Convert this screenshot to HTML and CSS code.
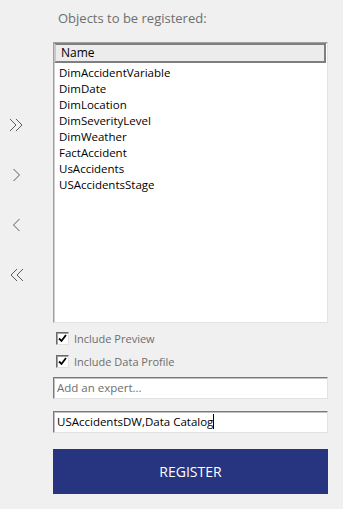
FILE: index.html
```html
<!DOCTYPE html>
<html lang="en">
<head>
    <meta charset="UTF-8">
    <meta name="viewport" content="width=device-width, initial-scale=1.0">
    <title>Register Objects</title>
    <link rel="stylesheet" href="styles.css">
</head>
<body>
    <div class="register-panel">
        <div class="move-buttons">
            <button class="move-btn" title="Add all">
                <svg width="15" height="14" viewBox="0 0 15 14"><path d="M1 1l6 6-6 6M7 1l6 6-6 6" fill="none" stroke="#5a5a5a" stroke-width="1"/></svg>
            </button>
            <button class="move-btn" title="Add">
                <svg width="15" height="14" viewBox="0 0 15 14"><path d="M4.5 1l6 6-6 6" fill="none" stroke="#5a5a5a" stroke-width="1"/></svg>
            </button>
            <button class="move-btn" title="Remove">
                <svg width="15" height="14" viewBox="0 0 15 14"><path d="M10.5 1l-6 6 6 6" fill="none" stroke="#5a5a5a" stroke-width="1"/></svg>
            </button>
            <button class="move-btn" title="Remove all">
                <svg width="15" height="14" viewBox="0 0 15 14"><path d="M14 1l-6 6 6 6M8 1l-6 6 6 6" fill="none" stroke="#5a5a5a" stroke-width="1"/></svg>
            </button>
        </div>

        <div class="register-form">
            <p class="form-title">Objects to be registered:</p>

            <div class="object-list">
                <div class="list-header">Name</div>
                <ul class="list-items">
                    <li>DimAccidentVariable</li>
                    <li>DimDate</li>
                    <li>DimLocation</li>
                    <li>DimSeverityLevel</li>
                    <li>DimWeather</li>
                    <li>FactAccident</li>
                    <li>UsAccidents</li>
                    <li>USAccidentsStage</li>
                </ul>
            </div>

            <label class="check-row">
                <span class="check-box"><svg width="9" height="9" viewBox="0 0 9 9"><path d="M1 4.5l2.5 2.5 4.5-6" fill="none" stroke="#000" stroke-width="1.8"/></svg></span>
                Include Preview
            </label>
            <label class="check-row">
                <span class="check-box"><svg width="9" height="9" viewBox="0 0 9 9"><path d="M1 4.5l2.5 2.5 4.5-6" fill="none" stroke="#000" stroke-width="1.8"/></svg></span>
                Include Data Profile
            </label>

            <div class="text-field placeholder">Add an expert...</div>
            <div class="text-field">USAccidentsDW,Data Catalog<span class="caret"></span></div>

            <button class="register-btn">REGISTER</button>
        </div>
    </div>
</body>
</html>
```

FILE: styles.css
```css
body {
    margin: 0;
    background: #eff0ef;
    font-family: 'Open Sans', 'Noto Sans', sans-serif;
    color: #000;
}
.register-panel {
    display: flex;
    width: 343px;
    height: 509px;
}
.move-buttons {
    width: 53px;
    display: flex;
    flex-direction: column;
    align-items: flex-start;
    padding-top: 117px;
    padding-left: 8px;
    box-sizing: border-box;
    gap: 35px;
}
.move-btn {
    width: 16px;
    height: 15px;
    padding: 0;
    border: none;
    background: none;
    display: flex;
    align-items: center;
    justify-content: center;
    cursor: pointer;
}
.register-form {
    width: 275px;
    display: flex;
    flex-direction: column;
}
.form-title {
    margin: 9px 0 15px 5px;
    font-size: 13px;
    line-height: 18px;
    color: #6e6e6e;
}
.object-list {
    height: 281px;
    box-sizing: border-box;
    background: #fff;
    border: 1px solid;
    border-color: #a0a0a0 #e3e3e3 #e3e3e3 #a0a0a0;
    box-shadow: inset 1px 1px 0 #d0d0d0;
}
.list-header {
    height: 20px;
    box-sizing: border-box;
    margin-right: 1px;
    background: #ececec;
    border: 2px solid #7f7f7f;
    border-left-color: #c8c8c8;
    padding-left: 5px;
    font-size: 12px;
    line-height: 16px;
}
.list-items {
    list-style: none;
    margin: 0;
    padding: 2px 0 0 5px;
    font-size: 11.5px;
    line-height: 16px;
}
.check-row {
    display: flex;
    align-items: center;
    height: 23px;
    padding-left: 3px;
    font-size: 11px;
    color: #6e6e6e;
}
.check-row:first-of-type {
    margin-top: 4px;
}
.check-box {
    width: 13px;
    height: 13px;
    box-sizing: border-box;
    margin-right: 5px;
    background: #fff;
    border: 1px solid;
    border-color: #6a6a6a #e0e0e0 #e0e0e0 #6a6a6a;
    box-shadow: inset 1px 1px 0 #a0a0a0;
    display: flex;
    align-items: center;
    justify-content: center;
}
.text-field {
    height: 22px;
    box-sizing: border-box;
    margin-top: 4px;
    background: #fff;
    border: 1px solid;
    border-color: #7a7a7a #e3e3e3 #e3e3e3 #7a7a7a;
    box-shadow: inset 1px 1px 0 #c0c0c0;
    padding-left: 3px;
    font-size: 11.5px;
    line-height: 20px;
    white-space: nowrap;
}
.text-field + .text-field {
    margin-top: 12px;
}
.placeholder {
    color: #6e6e6e;
}
.caret {
    display: inline-block;
    width: 1px;
    height: 15px;
    background: #000;
    vertical-align: -3px;
}
.register-btn {
    margin-top: 16px;
    height: 45px;
    border: none;
    background: #27347f;
    color: #fff;
    font-family: 'Open Sans', 'Noto Sans', sans-serif;
    font-size: 14px;
    cursor: pointer;
}
```
